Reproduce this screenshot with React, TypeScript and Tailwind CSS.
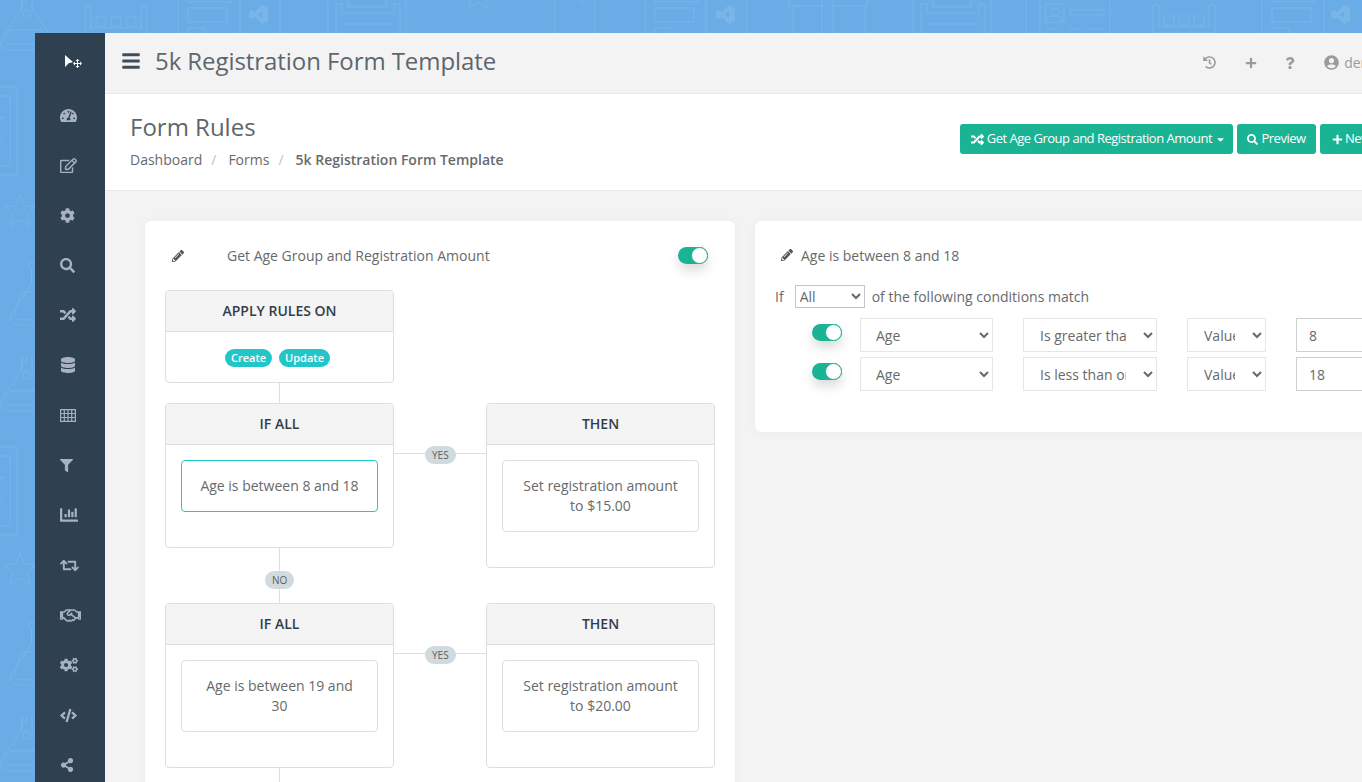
import type { ReactNode } from 'react';
import {
  FaBars,
  FaCaretDown,
  FaChartBar,
  FaCode,
  FaCog,
  FaCogs,
  FaDatabase,
  FaFilter,
  FaHistory,
  FaPencilAlt,
  FaPlus,
  FaQuestion,
  FaRandom,
  FaRegEdit,
  FaRegHandshake,
  FaRetweet,
  FaSearch,
  FaShareAlt,
  FaTachometerAlt,
  FaUserCircle,
} from 'react-icons/fa';

const TableIcon = () => (
  <svg width="16" height="13" viewBox="0 0 16 13" fill="none" stroke="currentColor" strokeWidth="1.2">
    <path d="M.6.6h14.800v11.800H.6zM.6 4.500h14.800M.6 8.500h14.800M4.300.6v11.800M8 .6v11.800M11.700.6v11.800" />
  </svg>
);

const navIcons = [
  <FaTachometerAlt size={17} />,
  <FaRegEdit size={17} />,
  <FaCog size={15} />,
  <FaSearch size={15} />,
  <FaRandom size={16} />,
  <FaDatabase size={16} />,
  <TableIcon />,
  <FaFilter size={13} />,
  <FaChartBar size={18} />,
  <FaRetweet size={19} />,
  <FaRegHandshake size={21} />,
  <FaCogs size={18} />,
  <FaCode size={17} />,
  <FaShareAlt size={14} />,
];

const SmallFlask = ({ x, y }: { x: number; y: number }) => (
  <g transform={`translate(${x} ${y})`}>
    <path d="M22 -4v12L2 38q-5 12 8 12h34q12 0 8-12L32 8V-4" />
    <path d="M10 30h32l5 8q1 5-4 6H9q-5-1-4-6z" />
    <circle cx="27" cy="14" r="4" />
    <circle cx="24" cy="-2" r="3" />
  </g>
);

const TallFlask = ({ x, y }: { x: number; y: number }) => (
  <g transform={`translate(${x} ${y}) scale(0.9)`}>
    <path d="M22 0h14v6h-3v18l24 32q4 12-8 13H10Q-2 68 3 56l22-32V6h-3z" />
    <path d="M14 32h32l8 24q1 5-4 7H10q-5-2-4-7z" />
  </g>
);

const Factory = ({ x, y }: { x: number; y: number }) => (
  <g transform={`translate(${x} ${y})`}>
    <path d="M0 0h6v22h50V0h6v28H0z" />
    <path d="M11 11h10v9H11zM26 11h10v9H26zM41 11h10v9H41z" />
  </g>
);

const FormMock = ({ x }: { x: number }) => (
  <g transform={`translate(${x} 0)`}>
    <path d="M0 0v34M62 0v34M10 -4h43v6H10zM10 8h39v14H10zM10 28h17v8H10z" />
  </g>
);

const Floppy = ({ x }: { x: number }) => (
  <g transform={`translate(${x} 0)`}>
    <path d="M0 34V4h6v9h52V4h6v30M12 0v7h38V0M8 24h49" />
    <path d="M-8 0v34M70 0v34" />
  </g>
);

const Star = ({ x, y }: { x: number; y: number }) => (
  <g transform={`translate(${x} ${y})`}>
    <path d="M15 0l4.500 11 10.500 1-8 7.500 2.500 11L15 25l-9.500 5.500 2.500-11-8-7.500 10.500-1z" />
  </g>
);

const VsLogo = ({ x, y }: { x: number; y: number }) => (
  <path
    transform={`translate(${x} ${y})`}
    d="M13 0l6 3v13l-6 3-7-7-3 2-3-2V7l3-2 3 2zm0 6l-4 3.500 4 3.500z"
    fillRule="evenodd"
    fill="#7ab5e8"
    stroke="none"
  />
);

const PagePattern = () => (
  <svg className="absolute inset-0" width="1362" height="782" fill="none" stroke="#78b4e9" strokeWidth="1">
    <SmallFlask x={0} y={0} />
    <Factory x={85} y={6} />
    <FormMock x={178} />
    <VsLogo x={249} y={5} />
    <path d="M280 0v34" />
    <Floppy x={336} />
    <Star x={463} y={-22} />
    <path d="M555 0v34M595 0v34M580 0l6 5" />
    <FormMock x={645} />
    <VsLogo x={716} y={5} />
    <path d="M705 0v34M747 0v34" />
    <path d="M789 0v6h33V0M793 6v28M822 6v28M833 0v6h34V0M833 6v28M865 6v28" />
    <Floppy x={921} />
    <path d="M1026 0v34M1040 0v34M1110 0v34" />
    <path d="M1045 4h19v18h-19zM1070 10h34v5h-34zM1046 29h12M1069 29h12M1090 29h12M1047 22v-5q8-3 15 0v5" />
    <circle cx="1055" cy="12" r="4" />
    <Factory x={1153} y={5} />
    <FormMock x={1262} />
    <VsLogo x={1331} y={5} />
    <path d="M0 87h17v88H0M0 96h10v70H0M0 118h5M0 135l3 3-3 3" />
    <Star x={5} y={195} />
    <TallFlask x={9} y={263} />
    <SmallFlask x={0} y={361} />
    <path d="M0 447h17v88H0M0 456h10v70H0M0 478h5M0 495l3 3-3 3" />
    <Star x={5} y={553} />
    <TallFlask x={9} y={623} />
    <SmallFlask x={0} y={721} />
  </svg>
);

const LogoMark = () => (
  <svg width="18" height="14" viewBox="0 0 18 14" fill="#fff">
    <path d="M0 0l8 7-3 1-1 0-4 4z" />
    <path d="M12.500 4l2 2h-1.500v2h2v-1.500l2 2-2 2V9h-2v2h1.500l-2 2-2-2H12V9h-2v1.500l-2-2 2-2V8h2V6h-1.500z" />
  </svg>
);

const Toggle = () => (
  <div className="relative h-[17px] w-[30px] rounded-full bg-[#1ab394] shadow-[0_6px_12px_rgba(0,0,0,0.15)]">
    <div className="absolute right-0 top-0 h-[17px] w-[17px] rounded-full border border-[#1ab394] bg-white" />
  </div>
);

const FlowBox = ({ title, children }: { title: string; children: ReactNode }) => (
  <div className="w-[229px] overflow-hidden rounded-[4px] border border-[#dedede] bg-white">
    <div className="flex h-[41px] items-center justify-center border-b border-[#dedede] bg-[#f4f4f4] pb-px text-[14px] font-semibold text-[#333e48]">
      {title}
    </div>
    {children}
  </div>
);

const RuleBox = ({ active, children }: { active?: boolean; children: ReactNode }) => (
  <div className="px-[15px] pb-[35px] pt-[15px]">
    <div
      className={
        active
          ? 'rounded-[4px] border border-[#23c6c8] px-4 py-[15px] text-center leading-5'
          : 'rounded-[4px] border border-[#dedede] px-4 py-[15px] text-center leading-5'
      }
    >
      {children}
    </div>
  </div>
);

const Line = ({ className }: { className: string }) => <div className={`w-px bg-[#dedede] ${className}`} />;

const FlowRow = ({
  condition,
  action,
  active,
  showNo,
}: {
  condition: string;
  action: string;
  active?: boolean;
  showNo?: boolean;
}) => (
  <div className="flex items-start">
    <div className="flex flex-col">
      <FlowBox title="IF ALL">
        <RuleBox active={active}>{condition}</RuleBox>
      </FlowBox>
      <div className="relative flex h-[55px] justify-center">
        <Line className="h-full" />
        {showNo && (
          <span className="absolute left-[100px] top-[23px] rounded-full bg-[#d1dade] px-[7px] text-[10px] font-normal leading-[18px] text-[#5e5e5e]">
            NO
          </span>
        )}
      </div>
    </div>
    <div className="relative mt-[50px] h-px w-[92px] bg-[#dedede]">
      <span className="absolute left-[31px] top-[-7px] rounded-full bg-[#d1dade] px-[7px] text-[10px] leading-[18px] text-[#5e5e5e]">
        YES
      </span>
    </div>
    <FlowBox title="THEN">
      <RuleBox>{action}</RuleBox>
    </FlowBox>
  </div>
);

const ConditionRow = ({ operator, value }: { operator: string; value: string }) => (
  <div className="flex items-start">
    <div className="ml-[37px] mt-[6px] w-[48px]">
      <Toggle />
    </div>
    <select className="h-[34px] w-[133px] border border-[#e5e6e7] bg-white pl-[11px] pr-[14px] text-[14px] text-[#676a6c]">
      <option>Age</option>
    </select>
    <select className="ml-[30px] h-[34px] w-[134px] border border-[#e5e6e7] bg-white pl-3 pr-[14px] text-[14px] text-[#676a6c]">
      <option>{operator}</option>
    </select>
    <select className="ml-[30px] h-[34px] w-[79px] border border-[#e5e6e7] bg-white pl-3 pr-[14px] text-[14px] text-[#676a6c]">
      <option>Value</option>
    </select>
    <input
      readOnly
      value={value}
      className="ml-[30px] h-[34px] w-[100px] border border-[#cfcfcf] bg-white px-3 text-[14px] text-[#676a6c]"
    />
  </div>
);

export default function App() {
  return (
    <div className="relative h-[782px] w-[1362px] overflow-hidden bg-[#6aade6] font-['Open_Sans',sans-serif] text-[14px] text-[#676a6c]">
      <PagePattern />
      <div className="relative ml-[35px] flex h-[782px] w-[1400px] pt-[33px]">
        <aside className="w-[70px] shrink-0 overflow-hidden bg-[#2f4050] text-[#a7b1c2]">
          <div className="flex h-[57px] items-center pl-[30px]">
            <LogoMark />
          </div>
          {navIcons.map((icon, index) => (
            <div key={index} className="flex h-[50px] items-center pl-[25px]">
              {icon}
            </div>
          ))}
        </aside>

        <main className="flex min-w-0 flex-1 flex-col bg-[#f3f3f4]">
          <header className="flex h-[61px] shrink-0 items-center border-b border-[#e7eaec] pb-[3px] pl-4 pr-[37px]">
            <FaBars size={20} className="mb-[2px] text-[#3f4d5b]" />
            <h1 className="mb-[2px] ml-[14px] text-[24px] leading-none tracking-[-0.07px] text-[#5e666d]">
              5k Registration Form Template
            </h1>
            <div className="ml-auto mt-[2px] flex items-center text-[#999c9e]">
              <FaHistory size={13} />
              <FaPlus size={12} className="ml-[29px]" />
              <FaQuestion size={12} className="ml-[27px]" />
              <FaUserCircle size={15} className="ml-[28px]" />
              <span className="ml-[5px] text-[14px]">demo</span>
              <FaCaretDown size={12} className="ml-1" />
            </div>
          </header>

          <section className="flex h-[97px] shrink-0 items-start justify-between border-b border-[#e7eaec] bg-white pl-[25px]">
            <div className="pt-4">
              <h2 className="text-[24px] font-normal leading-[33px] text-[#5e666d]">Form Rules</h2>
              <div className="mt-[7px] flex items-center leading-5">
                <span>Dashboard</span>
                <span className="pl-[9px] pr-3 text-[#c0c4c6]">/</span>
                <span>Forms</span>
                <span className="pl-[9px] pr-3 text-[#c0c4c6]">/</span>
                <span className="font-semibold">5k Registration Form Template</span>
              </div>
            </div>
            <div className="mt-[30px] flex gap-1 pr-[25px] text-[13px] tracking-[-0.5px] text-white">
              <div className="flex h-[30px] w-[273px] items-center justify-center gap-[3px] rounded-[3px] bg-[#1ab394] pl-1">
                <FaRandom size={13} />
                Get Age Group and Registration Amount
                <FaCaretDown size={11} />
              </div>
              <div className="flex h-[30px] w-[79px] items-center justify-center gap-[3px] rounded-[3px] bg-[#1ab394]">
                <FaSearch size={11} />
                Preview
              </div>
              <div className="flex h-[30px] w-[90px] items-center justify-center gap-[2px] rounded-[3px] bg-[#1ab394]">
                <FaPlus size={11} />
                New Rule
              </div>
            </div>
          </section>

          <div className="flex items-start gap-5 pl-10 pt-[30px]">
            <div className="w-[590px] shrink-0 rounded-[6px] bg-white pb-10 pl-5 pr-5 shadow-[0_0_10px_rgba(0,0,0,0.04)]">
              <div className="flex h-[69px] items-center pl-[7px] pr-[7px]">
                <FaPencilAlt size={12} className="text-[#555]" />
                <span className="ml-[43px]">Get Age Group and Registration Amount</span>
                <div className="ml-auto">
                  <Toggle />
                </div>
              </div>
              <FlowBox title="APPLY RULES ON">
                <div className="flex h-[50px] items-center justify-center gap-[7px] pr-1 pt-[2px] text-[11px] font-semibold text-white">
                  <span className="rounded-full bg-[#23c6c8] px-[6px] leading-[18px]">Create</span>
                  <span className="rounded-full bg-[#23c6c8] px-[6px] leading-[18px]">Update</span>
                </div>
              </FlowBox>
              <div className="flex w-[229px] justify-center">
                <Line className="h-5" />
              </div>
              <FlowRow
                active
                showNo
                condition="Age is between 8 and 18"
                action="Set registration amount to $15.00"
              />
              <FlowRow condition="Age is between 19 and 30" action="Set registration amount to $20.00" />
            </div>

            <div className="h-[211px] w-[660px] shrink-0 rounded-[6px] bg-white pl-5 pt-6 shadow-[0_0_10px_rgba(0,0,0,0.04)]">
              <div className="flex h-5 items-center pl-[6px]">
                <FaPencilAlt size={12} className="text-[#555]" />
                <span className="ml-2">Age is between 8 and 18</span>
              </div>
              <div className="mt-[17px] flex h-[28px] items-center">
                <span>If</span>
                <select className="ml-[11px] h-[23px] w-[70px] border border-[#c4c4c4] bg-white pl-0 text-[14px] text-[#676a6c]">
                  <option>All</option>
                </select>
                <span className="ml-[7px]">of the following conditions match</span>
              </div>
              <div className="mt-2 flex flex-col gap-[5px]">
                <ConditionRow operator="Is greater than" value="8" />
                <ConditionRow operator="Is less than or equal to" value="18" />
              </div>
            </div>
          </div>
        </main>
      </div>
    </div>
  );
}
